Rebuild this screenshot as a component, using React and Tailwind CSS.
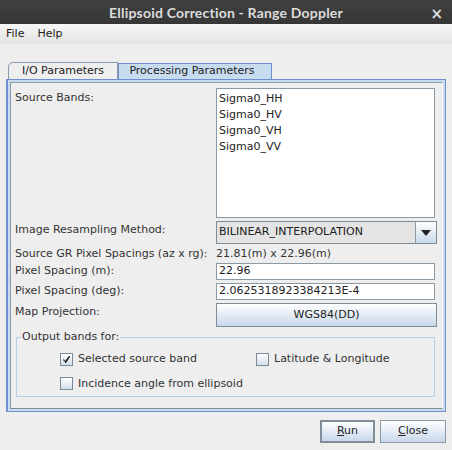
import React from "react";

const FONT = { fontFamily: '"DejaVu Sans", "Liberation Sans", sans-serif' };

function CheckBox({ checked, label }) {
  return (
    <div className="flex items-center gap-[5px]">
      <div className="w-[13px] h-[13px] border border-[#7a8a99] bg-gradient-to-b from-white to-[#d4deea] flex items-center justify-center">
        {checked && (
          <svg width="9" height="9" viewBox="0 0 9 9">
            <path d="M1 5 L3 7 L3 8 L4 8 L8 2 L8 1 L7 1 L3 6 L2 4 Z" fill="#222" />
          </svg>
        )}
      </div>
      <span className="text-[#333]">{label}</span>
    </div>
  );
}

function Field({ children }) {
  return (
    <div className="w-[219px] h-[17px] bg-white border border-[#8a99a6] px-[2px] flex items-center text-[#222]">
      {children}
    </div>
  );
}

export default function App() {
  return (
    <div className="w-[452px] h-[450px] bg-[#eeeeee] flex flex-col text-[11px] text-[#333] overflow-hidden" style={FONT}>
      <div className="h-[24px] bg-gradient-to-b from-[#404040] to-[#363636] relative flex items-center justify-center">
        <span className="text-[#dcdcdc] font-bold text-[14px] font-[Lato,'DejaVu_Sans',sans-serif] tracking-[0.2px]">
          Ellipsoid Correction - Range Doppler
        </span>
        <span className="absolute right-[9px] top-[3px] text-[#dcdcdc] font-bold text-[15px]">×</span>
      </div>
      <div className="h-[20px] bg-gradient-to-b from-[#f7f7f7] to-[#e3e3e3] flex items-center gap-[13px] px-[6px] text-[#222]">
        <span>File</span>
        <span>Help</span>
      </div>

      <div className="px-[6px] pt-[18px]">
        <div className="flex h-[17px] items-end pl-[2px]">
          <div className="h-[17px] w-[110px] border border-b-0 border-[#8b9aa8] rounded-tl-[5px] bg-[#eeeeee] flex items-center justify-center text-[#222]">
            I/O Parameters
          </div>
          <div className="h-[16px] w-[154px] border border-b-0 border-[#6f8fcf] bg-[#c8dcf0] flex items-center justify-center pr-[6px] text-[#222]">
            Processing Parameters
          </div>
        </div>

        <div className="w-[440px] h-[333px] border border-[#6f8fcf] border-l-2 bg-[#c9dbf0] p-[2px]">
          <div className="w-full h-full bg-[#eeeeee] border border-[#8d9aa6] border-r-white border-b-[#7f8d99] flex flex-col pl-[4px] pt-[5px]">
            <div className="flex">
              <div className="w-[201px] pt-[2px]">Source Bands:</div>
              <div className="w-[219px] h-[130px] bg-white border border-[#8a99a6] pl-[2px] pt-[2px] text-[#222] leading-[16px]">
                <div>Sigma0_HH</div>
                <div>Sigma0_HV</div>
                <div>Sigma0_VH</div>
                <div>Sigma0_VV</div>
              </div>
            </div>

            <div className="flex mt-[3px] h-[23px]">
              <div className="w-[201px] pt-[1px]">Image Resampling Method:</div>
              <div className="w-[221px] h-[23px] flex border border-[#7f8d99]">
                <div className="flex-1 bg-[#e4e4e4] border-r border-[#8a99a6] flex items-center pl-[2px] text-[#222]">
                  BILINEAR_INTERPOLATION
                </div>
                <div className="w-[20px] bg-gradient-to-b from-white to-[#c8d8ea] flex items-center justify-center">
                  <svg width="10" height="6" viewBox="0 0 10 6">
                    <path d="M0 0 H10 L5 6 Z" fill="#222" />
                  </svg>
                </div>
              </div>
            </div>

            <div className="flex mt-[2px] h-[17px] items-center">
              <div className="w-[201px] whitespace-nowrap">Source GR Pixel Spacings (az x rg):</div>
              <div className="text-[#333]">21.81(m) x 22.96(m)</div>
            </div>

            <div className="flex h-[17px] items-center">
              <div className="w-[201px]">Pixel Spacing (m):</div>
              <Field>22.96</Field>
            </div>

            <div className="flex mt-[3px] h-[17px] items-center">
              <div className="w-[201px]">Pixel Spacing (deg):</div>
              <Field>2.0625318923384213E-4</Field>
            </div>

            <div className="flex mt-[3px] h-[24px]">
              <div className="w-[201px] pt-[1px]">Map Projection:</div>
              <div className="w-[221px] h-[24px] border border-[#7f8d99] bg-gradient-to-b from-white to-[#c8d8ea] flex items-center justify-center text-[#222]">
                WGS84(DD)
              </div>
            </div>

            <div className="mt-[10px] ml-[1px] w-[419px] h-[60px] border border-[#b8cfe5] relative">
              <span className="absolute -top-[8px] left-[4px] bg-[#eeeeee] px-[1px] leading-[14px]">Output bands for:</span>
              <div className="flex pt-[13px] pl-[43px]">
                <div className="w-[196px]">
                  <CheckBox checked label="Selected source band" />
                </div>
                <CheckBox label="Latitude & Longitude" />
              </div>
              <div className="pt-[8px] pl-[43px]">
                <CheckBox label="Incidence angle from ellipsoid" />
              </div>
            </div>
          </div>
        </div>
      </div>

      <div className="flex justify-end gap-[5px] pr-[6px] pt-[8px]">
        <div className="w-[55px] h-[23px] border-2 border-[#7f8d99] bg-gradient-to-b from-white to-[#c8d8ea] flex items-center justify-center text-[#222]">
          <span><u>R</u>un</span>
        </div>
        <div className="w-[66px] h-[23px] border border-[#8a99a6] bg-gradient-to-b from-white to-[#c8d8ea] flex items-center justify-center text-[#222]">
          <span><u>C</u>lose</span>
        </div>
      </div>
    </div>
  );
}
